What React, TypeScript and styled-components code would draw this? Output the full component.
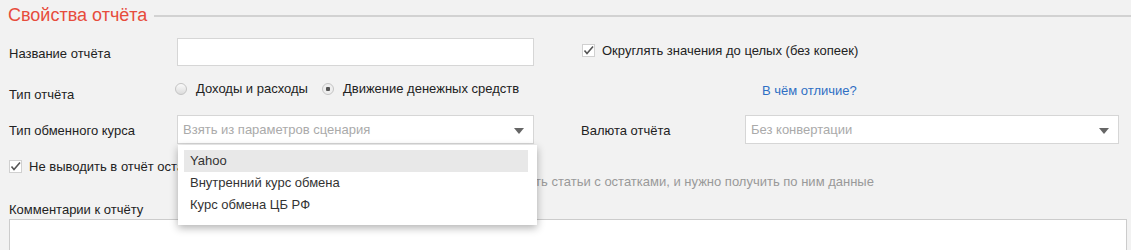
import styled, { createGlobalStyle } from "styled-components";

const Global = createGlobalStyle`
  html, body {
    margin: 0;
    background: #f2f2f2;
    font-family: "Liberation Sans", Arial, sans-serif;
    font-size: 13px;
    color: #222;
  }
`;

const Page = styled.div`
  position: relative;
  padding: 0 4px 0 9px;
  height: 250px;
  overflow: hidden;
`;

const Legend = styled.div`
  display: flex;
  align-items: center;
  gap: 7px;
  height: 32px;
  margin-left: -1px;
  margin-top: -1px;
  h1 {
    margin: 0;
    font-weight: 400;
    font-size: 18px;
    color: #e74c3c;
    white-space: nowrap;
  }
  span {
    flex: 1;
    border-top: 2px solid #d2d2d2;
    margin-right: -4px;
    margin-top: 2px;
  }
`;

const Row = styled.div<{ $mt: number; $h: number }>`
  display: grid;
  grid-template-columns: 168px 357px 47px 164px 374px;
  align-items: center;
  margin-top: ${(p) => p.$mt}px;
  height: ${(p) => p.$h}px;
`;

const Label = styled.label<{ $dy?: number }>`
  color: #222;
  padding-top: ${(p) => p.$dy ?? 2}px;
  white-space: nowrap;
`;

const TextInput = styled.input`
  box-sizing: border-box;
  height: 28px;
  width: 100%;
  border: 1px solid #d6d6d6;
  background: #fff;
  outline: none;
`;

const Select = styled.div`
  position: relative;
  box-sizing: border-box;
  height: 29px;
  width: 100%;
  border: 1px solid #d6d6d6;
  background: #fff;
  color: #aaa;
  padding: 0 30px 0 5px;
  display: flex;
  align-items: center;
  &::after {
    content: "";
    position: absolute;
    right: 9px;
    top: 12px;
    border-left: 5px solid transparent;
    border-right: 5px solid transparent;
    border-top: 6px solid #666;
  }
`;

const Check = styled.label`
  display: flex;
  align-items: center;
  gap: 7px;
  color: #222;
  white-space: nowrap;
`;

const CheckBox = () => (
  <svg width="13" height="13" viewBox="0 0 13 13">
    <rect x="0.5" y="0.5" width="12" height="12" fill="#fff" stroke="#d0d0d0" />
    <polyline
      points="2.5,6.5 5,9.5 11,2.5"
      fill="none"
      stroke="#555"
      strokeWidth="1.6"
    />
  </svg>
);

const Radios = styled.div`
  display: flex;
  align-items: center;
  gap: 14px;
  align-self: start;
  margin-left: -2px;
  padding-top: 2px;
  white-space: nowrap;
`;

const Radio = styled.span<{ $on?: boolean }>`
  display: inline-flex;
  align-items: center;
  gap: 9px;
  &::before {
    content: "";
    box-sizing: border-box;
    width: 12px;
    height: 12px;
    border-radius: 50%;
    border: 1px solid #c4c4c4;
    background: ${(p) =>
      p.$on
        ? "radial-gradient(circle, #555 0 2px, #eee 2.5px)"
        : "linear-gradient(#fafafa, #dcdcdc)"};
  }
`;

const Link = styled.a`
  grid-column: 5;
  align-self: start;
  padding: 4px 0 0 17px;
  color: #2f6fc4;
  text-decoration: none;
  white-space: nowrap;
`;

const Block = styled.div`
  margin-top: 15px;
  .hint {
    margin: 0 0 0 182px;
    color: #999;
    white-space: nowrap;
  }
`;

const CommentLabel = styled.div`
  margin-top: 13px;
  color: #222;
`;

const TextArea = styled.div`
  margin-top: 2px;
  height: 40px;
  border: 1px solid #ccc;
  background: #fff;
`;

const Menu = styled.ul`
  position: absolute;
  left: 178px;
  top: 145px;
  width: 359px;
  box-sizing: border-box;
  margin: 0;
  padding: 5px 9px 9px 6px;
  list-style: none;
  background: #fff;
  box-shadow: 0 3px 8px rgba(0, 0, 0, 0.3);
`;

const Item = styled.li<{ $active?: boolean }>`
  height: 22px;
  line-height: 22px;
  padding-left: 6px;
  color: #333;
  background: ${(p) => (p.$active ? "#e8e8e8" : "transparent")};
`;

export default function App() {
  return (
    <>
      <Global />
      <Page>
        <Legend>
          <h1>Свойства отчёта</h1>
          <span />
        </Legend>

        <Row $mt={7} $h={28}>
          <Label>Название отчёта</Label>
          <TextInput />
          <span />
          <Check style={{ gridColumn: "4 / 6", marginTop: -3, marginLeft: 1 }}>
            <CheckBox />
            Округлять значения до целых (без копеек)
          </Check>
        </Row>

        <Row $mt={13} $h={28}>
          <Label $dy={3}>Тип отчёта</Label>
          <Radios>
            <Radio>Доходы и расходы</Radio>
            <Radio $on>Движение денежных средств</Radio>
          </Radios>
          <Link href="#">В чём отличие?</Link>
        </Row>

        <Row $mt={8} $h={29}>
          <Label>Тип обменного курса</Label>
          <Select>Взять из параметров сценария</Select>
          <span />
          <Label>Валюта отчёта</Label>
          <Select>Без конвертации</Select>
        </Row>

        <Block>
          <Check>
            <CheckBox />
            Не выводить в отчёт остатки по счетам
          </Check>
          <div className="hint">
            Отметьте, если в сценарии не используются счета, но есть статьи с
            остатками, и нужно получить по ним данные
          </div>
        </Block>

        <CommentLabel>Комментарии к отчёту</CommentLabel>
        <TextArea />

        <Menu>
          <Item $active>Yahoo</Item>
          <Item>Внутренний курс обмена</Item>
          <Item>Курс обмена ЦБ РФ</Item>
        </Menu>
      </Page>
    </>
  );
}
